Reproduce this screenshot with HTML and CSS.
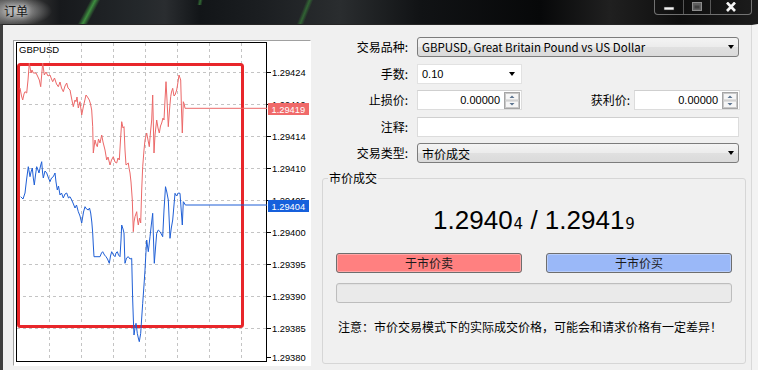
FILE: index.html
```html
<!DOCTYPE html>
<html lang="zh-CN">
<head>
<meta charset="utf-8">
<title>订单</title>
<link rel="stylesheet" href="styles.css">
</head>
<body>
<div class="titlebar">
  <span class="title">订单</span>
  <div class="winbtns">
    <div class="wb wb-min"><svg width="12" height="10" viewBox="0 0 12 10"><rect x="1" y="5" width="10" height="3" fill="#f4f4f4" stroke="#2a2a2a" stroke-width="0.6"/></svg></div>
    <div class="wb wb-max"><svg width="12" height="10" viewBox="0 0 12 10"><rect x="1.5" y="0.5" width="9" height="8" fill="#5e5e5e" stroke="#8c8c8c"/><rect x="3.5" y="3.5" width="5" height="3" fill="#3e3e3e"/></svg></div>
    <div class="wb wb-close"><svg width="14" height="10" viewBox="0 0 14 10"><path d="M3 0.5 L11 9 M11 0.5 L3 9" stroke="#f6f6f6" stroke-width="2.6"/></svg></div>
  </div>
</div>
<div class="client">
  <div class="chart">
    <svg width="296" height="324" viewBox="14 41 296 324">
      <defs>
        <clipPath id="peek1"><rect x="268" y="96" width="42" height="7"/></clipPath>
        <clipPath id="peek2"><rect x="268" y="193" width="42" height="7"/></clipPath>
      </defs>
      <g stroke="#c4c4c4" stroke-width="1" stroke-dasharray="3 3" fill="none">
        <path d="M49.5 43V361 M81.5 43V361 M113.5 43V361 M145.5 43V361 M177.5 43V361 M209.5 43V361 M241.5 43V361"/>
        <path d="M17 72.5H266 M17 104.5H266 M17 136.5H266 M17 168.5H266 M17 200.5H266 M17 232.5H266 M17 264.5H266 M17 296.5H266 M17 328.5H266"/>
      </g>
      <path d="M267 72.5H271 M267 104.5H271 M267 136.5H271 M267 168.5H271 M267 200.5H271 M267 232.5H271 M267 264.5H271 M267 296.5H271 M267 328.5H271 M267 357.5H271" stroke="#000" stroke-width="1"/>
      <rect x="16.5" y="42.5" width="250" height="319" fill="none" stroke="#000" stroke-width="1"/>
      <text class="gsym" x="19" y="52.5">GBPUSD</text>
      <g class="axis">
        <text x="272" y="76">1.29424</text>
        <text x="272" y="108" clip-path="url(#peek1)">1.29419</text>
        <text x="272" y="140">1.29414</text>
        <text x="272" y="171.8">1.29410</text>
        <text x="272" y="203.5" clip-path="url(#peek2)">1.29405</text>
        <text x="272" y="236">1.29400</text>
        <text x="272" y="267.8">1.29395</text>
        <text x="272" y="300">1.29390</text>
        <text x="272" y="331.8">1.29385</text>
        <text x="272" y="360.5">1.29380</text>
      </g>
      <rect x="18.5" y="64.5" width="224" height="262" rx="2" fill="none" stroke="#e8262a" stroke-width="3"/>
      <polyline fill="none" stroke="#ec6868" stroke-width="1" points="20,88 21.5,96 22.7,100 24,94 25,91.7 26.7,93 28,80 29.3,63 31,73 32,70 33.3,73 36,73 37.5,76 39.3,80 40.7,86.7 42.7,63 44.3,75 46,72 48,76 50,75 51.5,79 52.7,81.7 54.5,78 56.5,84 58.3,86.7 60,82 61.5,88 63.3,91.7 65,86 66.7,83 68,88 70,90 71.5,98 73.3,106.7 75,100 76,101.7 77,97 78.3,108 80,101.7 81.7,115 83.5,106 86,95 87.5,97 89.3,100 90.5,104 91.7,110 92.7,126.7 93.3,153 95,140 96,144 97.3,146.7 98.5,139 100,143 101.7,135 103,142 105,150 106.7,160 108,157 110,165 111.5,160 113.3,156.7 115,162 116.7,163 118,158 119.3,160 120.5,140 121.7,121.7 123,128 124,126.7 125,150 126,165 128.3,163 129,168 130,173 131,182 132.3,200 133.3,231.7 134,222 135,216.7 136.7,211.7 137.5,220 138.3,225 139.5,218 140.7,223 141.7,190 142.7,166.7 144,150 145,140 146.7,133 148,140 149.3,146.7 150.5,132 151.7,120 152.7,95 154,153 155,135 156.7,120 158,128 159.3,133 160.5,126 161.7,123 163,118 164,120 165,100 166,81.7 167,100 168.3,126.7 169.5,110 170.7,96.7 171.5,92 172.7,88.3 174,96 175,95 176.7,90 178,82 179,75 180.7,80 181.5,110 182.3,133 183.3,101.7 184.2,104 185,108.3 267,108.3"/>
      <polyline fill="none" stroke="#1f5fd6" stroke-width="1" points="20.7,196.7 23,199 25,193 26.5,180 28.3,166.7 30,176.7 31,172 32.3,168 33.3,178 34.3,185 35.5,175 36.7,166.7 38,170 39,173 40.5,166 41.7,161.7 42.5,172 43.3,178 45,171 46.7,173 48.5,178 50,181.7 51.5,178 53.3,176.7 55,173 56,182 57.3,190 58.5,186 60,195 61.5,193 63.3,198 65,194 66.7,193 68.5,198 70,196.7 71.7,200 73,203 75,208 76.5,205 78.3,211.7 80,216 81.7,223 83.5,212 85,206.7 86.5,209 88.3,210 89.5,208 90.7,213 91.8,222 92.7,233 93.3,245 94,256.7 97,256.7 100,256.7 101.5,253 102.7,251.7 104.5,255 106,256.7 107.5,259 109.3,263.3 110.5,256 111.7,251.7 113.5,255 115,256.7 116,253 117.3,251.7 118.5,255 120,256.7 121,240 121.7,225 123,229 124,233 124.5,250 125,263.3 126.5,258 128.3,256.7 130,259 131.7,258.3 132.2,280 132.7,300 133.3,318 134,335 135,328 136,323.3 137.3,333.3 138.3,338 139.3,341.7 140.7,333.3 141.7,318 142.7,303.3 144,285 145,270 145.8,255 146.7,240 147.5,246 148.3,251.7 149.2,244 150,236.7 151.3,225 152.7,213.3 153.5,240 154.3,263.3 155.5,248 156.7,233.3 158.3,230 160,231.7 161.3,234 162.7,236.7 164,210 165.5,186.7 166.8,192 168.3,200 169.2,220 170,238.3 171.3,228 172.7,220 174,205 175,193.3 176.5,196 178.3,193 180,193.3 181.2,210 182.3,225 183.3,201.7 184.3,203 185.3,205 267,205"/>
      <rect x="268" y="103" width="41" height="12" fill="#f06a6a"/>
      <text class="tag" x="271.5" y="112.5">1.29419</text>
      <rect x="268" y="200" width="41" height="12" fill="#1660dc"/>
      <text class="tag" x="271.5" y="209.5">1.29404</text>
    </svg>
  </div>
  <div class="panel">
    <div class="row">
      <span class="lbl">交易品种:</span>
      <div class="combo combo-gray combo-wide"><span class="latin">GBPUSD, Great Britain Pound vs US Dollar</span><i class="arrow"></i></div>
    </div>
    <div class="row">
      <span class="lbl">手数:</span>
      <div class="combo combo-white combo-small"><span class="num">0.10</span><i class="arrow"></i></div>
    </div>
    <div class="row">
      <span class="lbl">止损价:</span>
      <div class="field field-spin"><span class="num val">0.00000</span>
        <span class="spin"><svg width="16" height="17" viewBox="0 0 16 17"><rect x="0.5" y="0.5" width="15" height="16" fill="#ececec" stroke="#a5a5a5"/><rect x="1.5" y="1.5" width="13" height="6.5" fill="#f6f6f6" stroke="#c8c8c8"/><rect x="1.5" y="9" width="13" height="6.5" fill="#f6f6f6" stroke="#c8c8c8"/><path d="M5.5 6 L8 3.5 L10.5 6Z M5.5 11 L8 13.5 L10.5 11Z" fill="#5d7590"/></svg></span>
      </div>
      <span class="lbl lbl-right">获利价:</span>
      <div class="field field-spin field-tp"><span class="num val">0.00000</span>
        <span class="spin"><svg width="16" height="17" viewBox="0 0 16 17"><rect x="0.5" y="0.5" width="15" height="16" fill="#ececec" stroke="#a5a5a5"/><rect x="1.5" y="1.5" width="13" height="6.5" fill="#f6f6f6" stroke="#c8c8c8"/><rect x="1.5" y="9" width="13" height="6.5" fill="#f6f6f6" stroke="#c8c8c8"/><path d="M5.5 6 L8 3.5 L10.5 6Z M5.5 11 L8 13.5 L10.5 11Z" fill="#5d7590"/></svg></span>
      </div>
    </div>
    <div class="row">
      <span class="lbl">注释:</span>
      <div class="field field-wide"></div>
    </div>
    <div class="row row-last">
      <span class="lbl">交易类型:</span>
      <div class="combo combo-gray combo-wide"><span>市价成交</span><i class="arrow"></i></div>
    </div>
    <fieldset class="group">
      <legend>市价成交</legend>
      <div class="price"><span class="big">1.2940</span><span class="small">4</span><span class="big"> / 1.2941</span><span class="small">9</span></div>
      <div class="btnrow">
        <div class="btn btn-sell">于市价卖</div>
        <div class="btn btn-buy">于市价买</div>
      </div>
      <div class="progress"></div>
      <div class="note">注意：市价交易模式下的实际成交价格，可能会和请求价格有一定差异！</div>
    </fieldset>
  </div>
</div>
</body>
</html>
```

FILE: styles.css
```css
* { box-sizing: border-box; }
html, body { margin: 0; padding: 0; }
body {
  width: 758px;
  height: 370px;
  overflow: hidden;
  background: #f0f0f0;
  font-family: "Noto Sans CJK SC", sans-serif;
  font-size: 12px;
  color: #000;
}

.titlebar {
  height: 24px;
  display: flex;
  justify-content: space-between;
  align-items: flex-start;
  background:
    radial-gradient(ellipse 36px 15px at 16px 11px, rgba(205,205,205,0.8), rgba(205,205,205,0)),
    linear-gradient(118deg, transparent 38%, rgba(70,170,70,0.8) 50%, transparent 62%) 74px 0 / 30px 24px no-repeat,
    linear-gradient(112deg, transparent 40%, rgba(60,150,60,0.55) 50%, transparent 60%) 292px 0 / 26px 24px no-repeat,
    linear-gradient(100deg, transparent 35%, rgba(70,160,70,0.6) 50%, transparent 65%) 192px 0 / 16px 5px no-repeat,
    linear-gradient(to right, #4c4c4c 0, #363636 30px, #17191c 60px, #24282b 140px, #2a2d30 165px, #121518 200px, #1b1e21 260px, #2a2d2f 340px, #111315 420px, #070809 540px, #202020 610px, #0e0e0e 680px, #1c1c1c 758px);
}
.title {
  padding-left: 4px;
  line-height: 22px;
  font-size: 12px;
  color: #161616;
  text-shadow: 0 0 5px rgba(230,230,230,0.9), 0 0 9px rgba(220,220,220,0.8);
}
.winbtns {
  display: flex;
  margin-right: 6px;
  height: 15px;
  border: 1px solid rgba(190,190,190,0.55);
  border-top: none;
  border-radius: 0 0 4px 4px;
}
.wb {
  width: 28px;
  display: flex;
  align-items: center;
  justify-content: center;
  border-left: 1px solid rgba(190,190,190,0.4);
}
.wb-min { border-left: none; }
.wb-max { width: 27px; }
.wb-close { width: 41px; }
.wb svg { display: block; }

.client {
  display: flex;
  height: 346px;
  border-left: 3px solid #3e3e3e;
  border-top: 1px solid #262626;
  border-right: 6px solid #f3f3f3;
  box-shadow: inset -1px 0 0 #d9d9d9;
}

.chart {
  flex: none;
  margin-left: 10px;
  margin-top: 15px;
  width: 298px;
  height: 326px;
  border: 1px solid;
  border-color: #a0a0a0 #ffffff #ffffff #a0a0a0;
  background: #fff;
}
.chart svg { display: block; }
.gsym { font-family: "Liberation Sans", sans-serif; font-size: 9.5px; fill: #000; }
.axis text { font-family: "Liberation Sans", sans-serif; font-size: 9.3px; fill: #000; }
.tag { font-family: "Liberation Sans", sans-serif; font-size: 9.3px; fill: #fff; }

.panel {
  flex: none;
  width: 441px;
  padding-top: 12px;
}
.row {
  display: flex;
  align-items: center;
  width: 429px;
  height: 20px;
  margin-bottom: 6.5px;
}
.row-last { margin-bottom: 0; }
.lbl {
  flex: none;
  width: 97px;
  margin-right: 9px;
  text-align: right;
  white-space: nowrap;
  line-height: 20px;
}
.lbl.lbl-right {
  width: 108px;
  margin-right: 4px;
}

.combo {
  flex: none;
  height: 20px;
  display: flex;
  align-items: center;
  justify-content: space-between;
  padding-left: 4px;
  padding-right: 4px;
}
.combo-wide { width: 322px; }
.combo-small { width: 105px; }
.combo-gray {
  border: 1px solid #7c7c7c;
  border-radius: 3px;
  background: linear-gradient(#f4f4f4, #ececec 48%, #e0e0e0 52%, #dadada);
}
.combo-white {
  background: #fff;
  border: 1px solid #e2e2e2;
  padding-right: 6px;
}
.arrow {
  width: 0;
  height: 0;
  border-left: 3.5px solid transparent;
  border-right: 3.5px solid transparent;
  border-top: 4px solid #000;
}
.latin { font-size: 11.5px; }
.num { font-family: "Liberation Sans", sans-serif; font-size: 11px; }

.field {
  flex: none;
  height: 20px;
  background: #fff;
  border: 1px solid #dcdcdc;
  border-top-color: #cfcfcf;
}
.field-wide { width: 322px; }
.field-spin {
  width: 105px;
  display: flex;
  align-items: center;
  justify-content: flex-end;
  padding-right: 1px;
}
.field-tp { width: 106px; }
.val { margin-right: 4px; }
.spin { display: block; }
.spin svg { display: block; }

.group {
  margin: 7px 0 0 11px;
  padding: 0;
  width: 424px;
  height: 194px;
  border: 1px solid #d6d6d6;
  border-radius: 3px;
  min-width: 0;
}
.group legend {
  margin-left: 5px;
  padding: 0 1px;
  line-height: 16px;
  font-size: 12px;
}
.price {
  margin-top: 19px;
  height: 30px;
  line-height: 30px;
  text-align: center;
  font-family: "Liberation Sans", sans-serif;
  white-space: pre;
}
.big { font-size: 26px; }
.small { font-family: "DejaVu Sans", sans-serif; font-size: 15px; margin-left: 1px; }

.btnrow {
  display: flex;
  gap: 24px;
  margin: 18px 13px 0 13px;
}
.btn {
  flex: 1;
  height: 20px;
  line-height: 18px;
  text-align: center;
  border: 1px solid #6e6e6e;
  border-radius: 3px;
  color: #1a1a1a;
  box-shadow: inset 0 0 0 1px rgba(255,255,255,0.3);
}
.btn-sell { background: #ff8080; }
.btn-buy { background: #9ab8f8; }

.progress {
  margin: 10px 13px 0 13px;
  height: 20px;
  border: 1px solid #bdbdbd;
  border-radius: 3px;
  background: #eaeaea;
  box-shadow: inset 0 1px 1px rgba(0,0,0,0.04);
}
.note {
  margin: 16px 0 0 15px;
  line-height: 16px;
  font-size: 12px;
}
```
